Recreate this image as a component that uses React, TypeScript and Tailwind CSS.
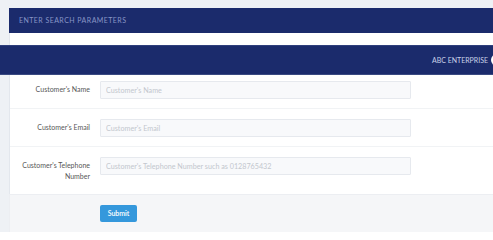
import React from "react";

const inputCls =
  "ml-[10px] w-[311px] h-[18px] bg-[#f8f9fb] border border-[#e6e9ee] rounded-[1px] px-[5px] text-[7.2px] text-[#555] placeholder:text-[#c3c7ce] outline-none";
const labelCls = "w-[80px] shrink-0 text-right pt-[3px] text-[7px] leading-[11px] text-[#575757]";

export default function App() {
  return (
    <div className="w-[493px] h-[232px] overflow-hidden bg-[#eef1f5] font-['Lato',sans-serif]">
      <div className="pt-[8px] pl-[9px]">
        <div className="h-[25px] bg-[#1b2b6c] flex items-center pl-[10px] text-[7px] tracking-[0.45px] uppercase text-[#8795c6]">
          Enter search parameters
        </div>
        <div className="h-[12px] bg-white border-l border-[#e3e7ed]" />
      </div>
      <nav className="h-[30px] bg-[#1b2b6c] border-t border-[#2f3f7c] border-b border-b-[#3a4a82] flex items-center justify-end">
        <span className="text-[7px] text-[#c9d1e8]">ABC ENTERPRISE</span>
        <span className="ml-[3px] mr-[-10px] w-[12px] h-[12px] rounded-full bg-white shrink-0" />
      </nav>
      <div className="pl-[9px]">
        <div className="bg-white border-l border-[#e3e7ed]">
          <div className="pt-[6px] pb-[9px] flex items-start border-b border-[#f1f3f5]">
            <div className={labelCls}>Customer's Name</div>
            <input className={inputCls} placeholder="Customer's Name" />
          </div>
          <div className="pt-[10px] pb-[9px] flex items-start border-b border-[#f1f3f5]">
            <div className={labelCls}>Customer's Email</div>
            <input className={inputCls} placeholder="Customer's Email" />
          </div>
          <div className="pt-[10px] pb-[12px] flex items-start">
            <div className={labelCls}>
              Customer's Telephone
              <br />
              Number
            </div>
            <input className={inputCls} placeholder="Customer's Telephone Number such as 0128765432" />
          </div>
        </div>
        <div className="h-[50px] bg-[#f5f6f8] border-l border-t border-[#eceef2] pt-[10px] pl-[90px] flex items-start">
          <button className="w-[37px] h-[17px] bg-[#3598dc] rounded-[2px] text-white text-[7px] font-semibold flex items-center justify-center">
            Submit
          </button>
        </div>
      </div>
    </div>
  );
}
